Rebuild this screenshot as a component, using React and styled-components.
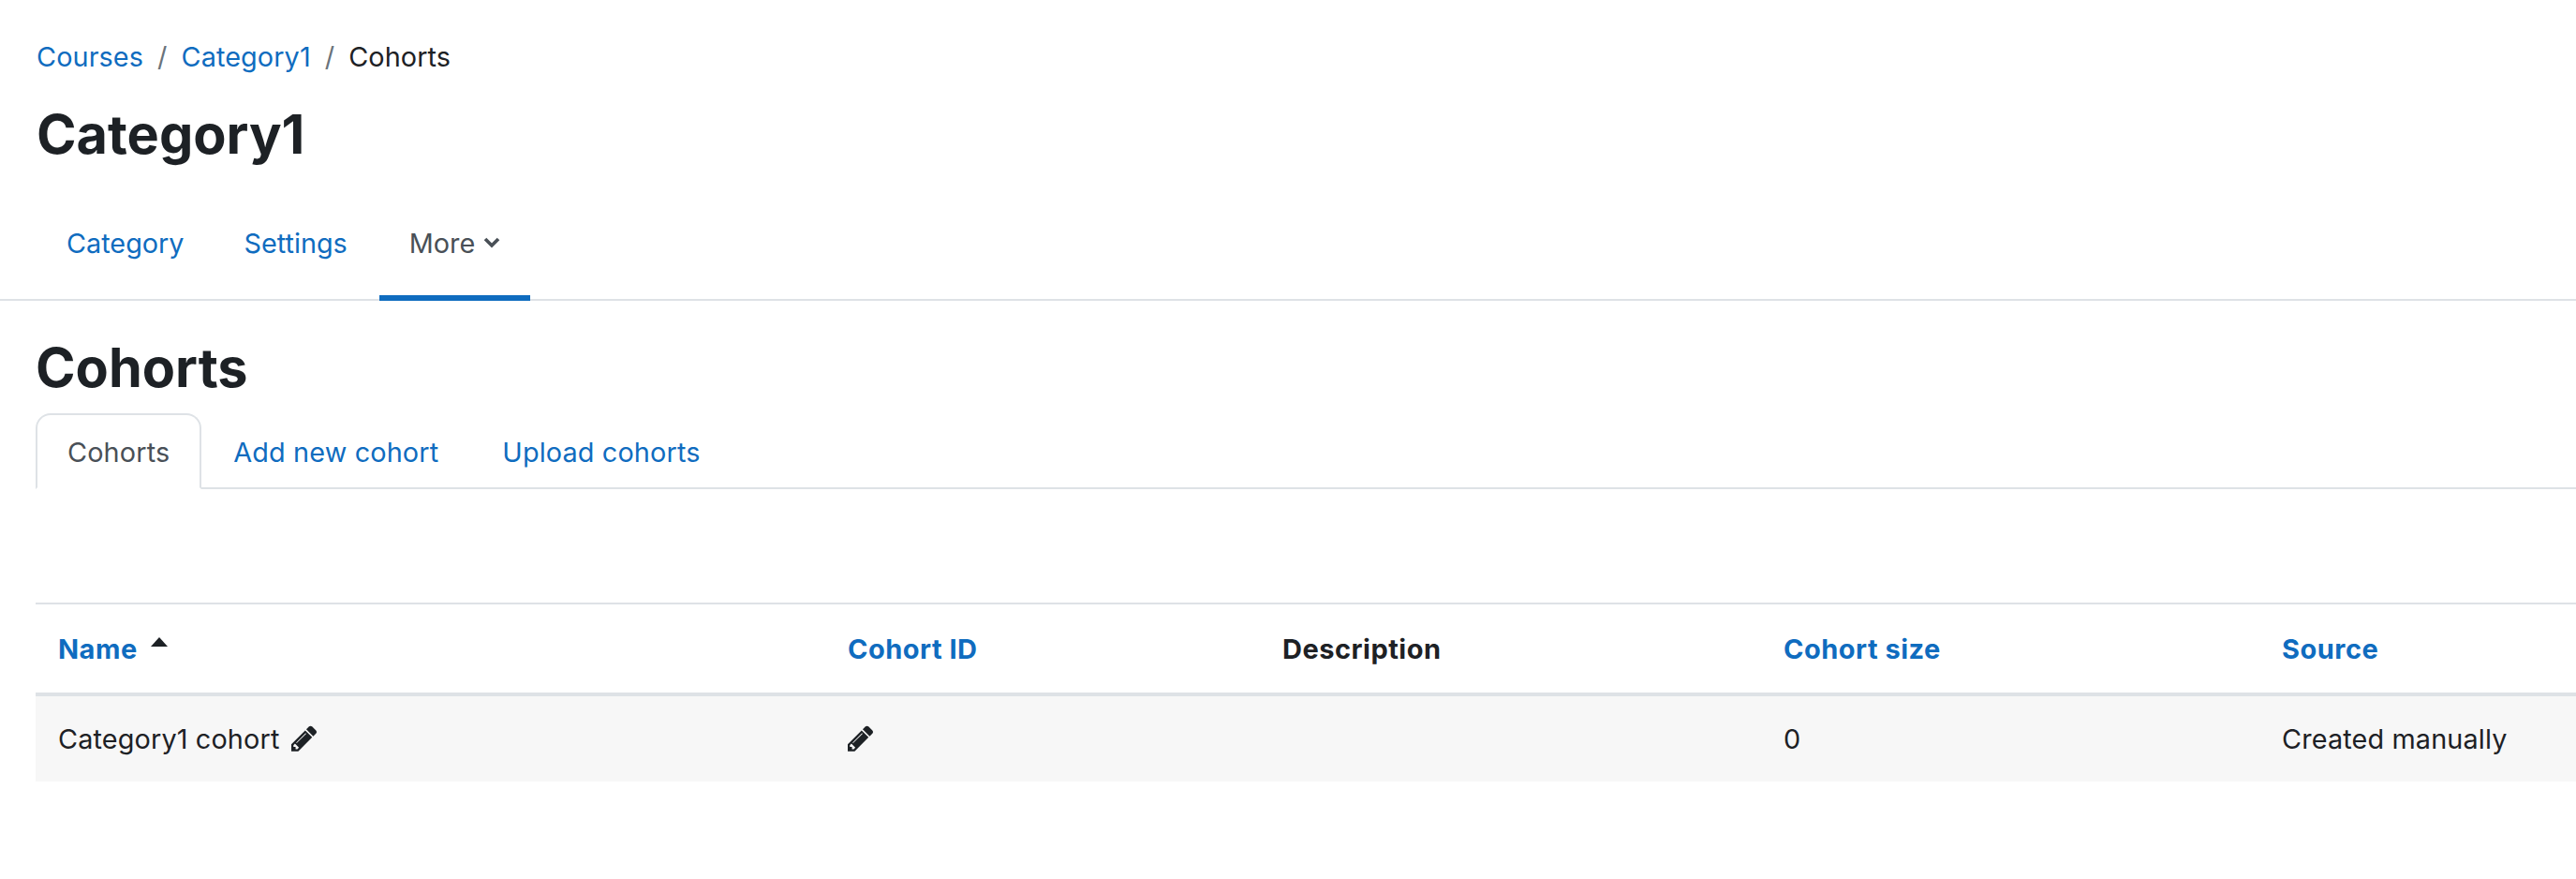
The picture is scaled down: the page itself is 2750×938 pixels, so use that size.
import React from "react";
import styled, { createGlobalStyle } from "styled-components";

const GlobalStyle = createGlobalStyle`
  html, body {
    margin: 0;
    background: #fff;
    overflow: hidden;
  }
  body {
    font-family: Inter, "Liberation Sans", sans-serif;
    font-size: 28.8px;
    color: #1d2125;
  }
  * {
    box-sizing: border-box;
  }
`;

const Pencil = ({ flush }) => (
  <PencilIcon $flush={flush} viewBox="128 128 1515 1536">
    <path d="M491 1536l91-91-235-235-91 91v107h128v128h107zm523-928q0-22-22-22-10 0-17 7l-542 542q-7 7-7 17 0 22 22 22 10 0 17-7l542-542q7-7 7-17zm-54-192l416 416-832 832h-416v-416zm683 96q0 53-37 90l-166 166-416-416 166-165q36-38 90-38 53 0 91 38l235 234q37 39 37 91z" />
  </PencilIcon>
);

const App = () => {
  return (
    <Page>
      <GlobalStyle />
      <Header>
        <Breadcrumb>
          <Link href="#">Courses</Link>
          <Slash>/</Slash>
          <Link href="#">Category1</Link>
          <Slash>/</Slash>
          <span>Cohorts</span>
        </Breadcrumb>
        <Title>Category1</Title>
      </Header>
      <Nav>
        <NavItem href="#">Category</NavItem>
        <NavItem href="#">Settings</NavItem>
        <NavItem href="#" $active>
          More
          <svg width="18" height="12" viewBox="0 0 18 12">
            <polyline points="2,2 9,9 16,2" fill="none" stroke="#495057" strokeWidth="3.6" />
          </svg>
        </NavItem>
      </Nav>
      <Main>
        <Heading>Cohorts</Heading>
        <Tabs>
          <Tab href="#" $active>Cohorts</Tab>
          <Tab href="#">Add new cohort</Tab>
          <Tab href="#">Upload cohorts</Tab>
        </Tabs>
        <Table>
          <colgroup>
            <Col $w={843} />
            <Col $w={464} />
            <Col $w={535} />
            <Col $w={532} />
            <Col $w={338} />
          </colgroup>
          <thead>
            <tr>
              <Th>
                <Link href="#">Name</Link>
                <SortCaret />
              </Th>
              <Th><Link href="#">Cohort ID</Link></Th>
              <Th>Description</Th>
              <Th><Link href="#">Cohort size</Link></Th>
              <Th><Link href="#">Source</Link></Th>
            </tr>
          </thead>
          <tbody>
            <Row>
              <Td>
                Category1 cohort
                <Pencil />
              </Td>
              <Td><Pencil flush /></Td>
              <Td />
              <Td>0</Td>
              <Td>Created manually</Td>
            </Row>
          </tbody>
        </Table>
      </Main>
    </Page>
  );
};

export default App;

const Page = styled.div`
  width: 2750px;
  height: 938px;
  overflow: hidden;
`;
const Header = styled.header`
  padding: 38px 0 0 39px;
`;
const Breadcrumb = styled.nav`
  display: flex;
  align-items: center;
  height: 45px;
  line-height: 45px;
  letter-spacing: 0.1px;
`;
const Link = styled.a`
  color: #0f6cbf;
  text-decoration: none;
`;
const Slash = styled.span`
  color: #6a737b;
  margin: 0 15px;
`;
const Title = styled.h1`
  margin: 24px 0 0;
  font-size: 57.6px;
  line-height: 72px;
  font-weight: 700;
`;
const Nav = styled.nav`
  display: flex;
  height: 118px;
  margin-top: 24px;
  padding-left: 39px;
  border-bottom: 2px solid #dee2e6;
`;
const NavItem = styled.a`
  display: flex;
  align-items: center;
  gap: 9px;
  height: 118px;
  margin-left: ${(props) => (props.$active ? "2px" : 0)};
  padding: 0 32px;
  color: ${(props) => (props.$active ? "#495057" : "#0f6cbf")};
  border-bottom: 6px solid ${(props) => (props.$active ? "#0f6cbf" : "transparent")};
  text-decoration: none;
`;
const Main = styled.main`
  padding-left: 38px;
`;
const Heading = styled.h2`
  margin: 35px 0 0;
  font-size: 57.6px;
  line-height: 72px;
  font-weight: 700;
`;
const Tabs = styled.div`
  display: flex;
  height: 81px;
  margin-top: 13px;
  border-bottom: 2px solid #dee2e6;
`;
const Tab = styled.a`
  display: flex;
  align-items: center;
  height: 81px;
  padding: 1px 32px 0;
  letter-spacing: 0.15px;
  color: ${(props) => (props.$active ? "#495057" : "#0f6cbf")};
  background: ${(props) => (props.$active ? "#fff" : "transparent")};
  border: 2px solid ${(props) => (props.$active ? "#dee2e6" : "transparent")};
  border-bottom-color: ${(props) => (props.$active ? "#fff" : "transparent")};
  border-radius: 16px 16px 0 0;
  text-decoration: none;
`;
const Table = styled.table`
  width: 2712px;
  margin-top: 121px;
  table-layout: fixed;
  border-collapse: collapse;
  border-top: 2px solid #dee2e6;
`;
const Col = styled.col`
  width: ${(props) => props.$w}px;
`;
const Th = styled.th`
  height: 97px;
  padding: 0 24px;
  text-align: left;
  font-size: 29px;
  font-weight: 700;
  letter-spacing: 0.5px;
  border-bottom: 4px solid #dee2e6;
`;
const SortCaret = styled.span`
  display: inline-block;
  margin-left: 14px;
  vertical-align: 13px;
  border-left: 9px solid transparent;
  border-right: 9px solid transparent;
  border-bottom: 10px solid #1d2125;
`;
const Row = styled.tr`
  background: #f7f7f7;
`;
const Td = styled.td`
  height: 93px;
  padding: 0 24px;
  letter-spacing: 0.15px;
`;
const PencilIcon = styled.svg`
  width: 27px;
  height: 28px;
  margin-left: ${(props) => (props.$flush ? 0 : "13px")};
  vertical-align: -3px;
  fill: #1d2125;
`;
